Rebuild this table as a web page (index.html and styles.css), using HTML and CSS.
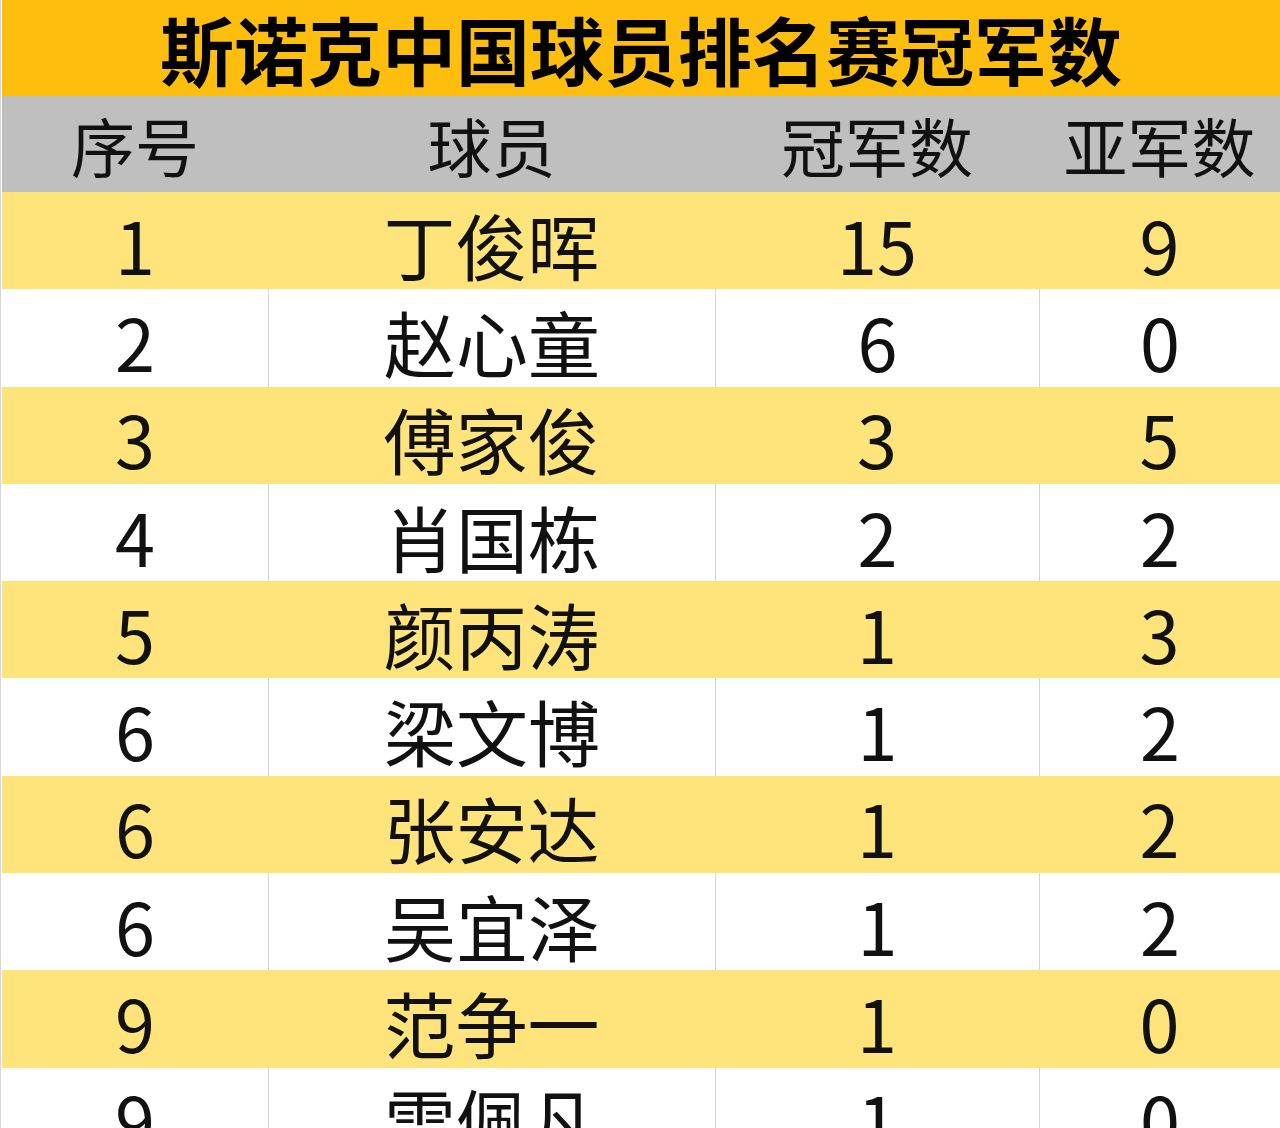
FILE: index.html
```html
<!DOCTYPE html>
<html lang="zh-CN">
<head>
<meta charset="utf-8">
<title>斯诺克中国球员排名赛冠军数</title>
<link rel="stylesheet" href="styles.css">
</head>
<body>
<div class="sheet">
  <div class="title"><span class="title-text">斯诺克中国球员排名赛冠军数</span></div>
  <div class="row head">
    <div class="cell">序号</div>
    <div class="cell">球员</div>
    <div class="cell">冠军数</div>
    <div class="cell">亚军数</div>
  </div>
  <div class="row odd">
    <div class="cell">1</div><div class="cell">丁俊晖</div><div class="cell">15</div><div class="cell">9</div>
  </div>
  <div class="row even">
    <div class="cell">2</div><div class="cell">赵心童</div><div class="cell">6</div><div class="cell">0</div>
  </div>
  <div class="row odd">
    <div class="cell">3</div><div class="cell">傅家俊</div><div class="cell">3</div><div class="cell">5</div>
  </div>
  <div class="row even">
    <div class="cell">4</div><div class="cell">肖国栋</div><div class="cell">2</div><div class="cell">2</div>
  </div>
  <div class="row odd">
    <div class="cell">5</div><div class="cell">颜丙涛</div><div class="cell">1</div><div class="cell">3</div>
  </div>
  <div class="row even">
    <div class="cell">6</div><div class="cell">梁文博</div><div class="cell">1</div><div class="cell">2</div>
  </div>
  <div class="row odd">
    <div class="cell">6</div><div class="cell">张安达</div><div class="cell">1</div><div class="cell">2</div>
  </div>
  <div class="row even">
    <div class="cell">6</div><div class="cell">吴宜泽</div><div class="cell">1</div><div class="cell">2</div>
  </div>
  <div class="row odd">
    <div class="cell">9</div><div class="cell">范争一</div><div class="cell">1</div><div class="cell">0</div>
  </div>
  <div class="row even">
    <div class="cell">9</div><div class="cell">雷佩凡</div><div class="cell">1</div><div class="cell">0</div>
  </div>
</div>
</body>
</html>
```

FILE: styles.css
```css
html, body {
  margin: 0;
  padding: 0;
  background: #ffffff;
}

body {
  width: 1280px;
  height: 1128px;
  overflow: hidden;
  font-family: "Noto Sans CJK SC", "Noto Sans", sans-serif;
  color: #111111;
}

.sheet {
  display: flex;
  flex-direction: column;
  padding-left: 1px;
  border-left: 1px solid #d8d8d8;
  height: 100%;
  box-sizing: border-box;
}

.title {
  height: 96px;
  background: #fdbe0e;
  text-align: center;
  flex-shrink: 0;
}

.title-text {
  display: inline-block;
  font-size: 74px;
  font-weight: 700;
  line-height: 96px;
  color: #000000;
}

.row {
  display: grid;
  grid-template-columns: 266px 447px 324px 1fr;
  flex-shrink: 0;
}

.cell {
  display: flex;
  align-items: center;
  justify-content: center;
  line-height: 1;
}

.head {
  height: 96px;
  background: #bfbfbf;
  font-size: 64px;
}

.odd,
.even {
  height: 97.3px;
  font-size: 72px;
}

.odd .cell,
.even .cell {
  padding-top: 6px;
  box-sizing: border-box;
}

.odd {
  background: #ffe47c;
}

.even {
  background: #ffffff;
}

.even .cell + .cell {
  border-left: 1px solid #d4d4d4;
}
```
